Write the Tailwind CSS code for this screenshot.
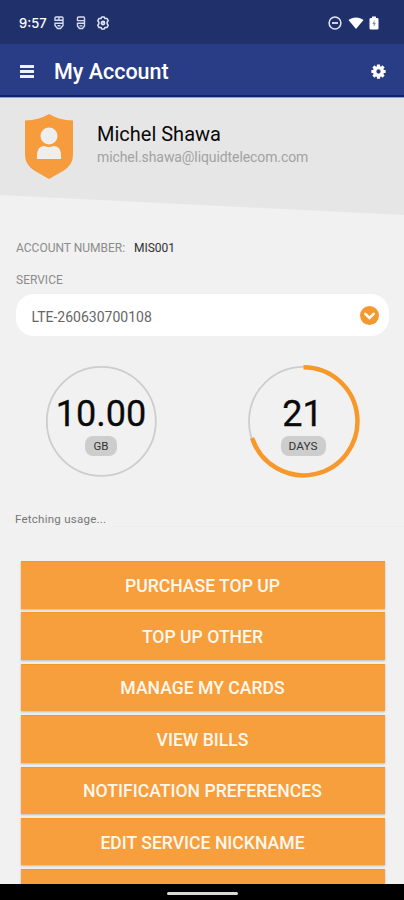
<!DOCTYPE html>
<html lang="en">
<head>
<meta charset="utf-8">
<title>My Account</title>
<script src="https://cdn.jsdelivr.net/npm/@tailwindcss/browser@4"></script>
</head>
<body class="w-[404px] h-[900px] overflow-hidden bg-[#f1f1f1] font-[Roboto,sans-serif] flex flex-col whitespace-nowrap">
  <div class="h-[44px] shrink-0 bg-[#20306a] text-white flex items-center pl-[19px] pr-[25px]">
    <span class="w-[34px] text-[13px] leading-none font-medium font-[Inter,sans-serif] pt-[3px]">9:57</span>
    <svg class="w-[12px] h-[14px] mt-[2px]" viewBox="0 0 12 14" fill="none" stroke="#d5dbf2" stroke-width="1.400"><path d="M3 1h6q1 0 1 1v7.500L7.500 12.500h-3L2 9.500V7.200h8M10 4.300H2V2q0-1 1-1M4.500 9.700h3M6 1v3"/></svg>
    <svg class="w-[12px] h-[14px] mt-[2px] ml-[10px]" viewBox="0 0 12 14" fill="none" stroke="#d5dbf2" stroke-width="1.400"><path d="M2.500 5V2q0-1 1-1h5q1 0 1 1v8L7.500 12.500h-3l-2-2.500V7.300h7M2.500 4.600h7M4.500 9.900h3"/></svg>
    <svg class="w-[14px] h-[14px] mt-[2px] ml-[9px]" viewBox="0 0 14 14" fill="none" stroke="#e1e6f8" stroke-width="1.500" stroke-linejoin="round"><path d="M5.700 1h2.600l.7 1.600 1.900-.2 1.300 2.300L11.100 6.200v1.600l1.100 1.500-1.300 2.300-1.900-.2-.7 1.600H5.700L5 11.400l-1.900.2-1.300-2.300 1.100-1.500V6.200L1.800 4.700l1.300-2.300 1.900.2z"/><circle cx="7" cy="7" r="1.500" stroke-width="1.800"/></svg>
    <svg class="w-[14px] h-[14px] ml-auto mt-[2px]" viewBox="0 0 14 14" fill="none" stroke="#e1e6f8"><circle cx="7" cy="7" r="5.900" stroke-width="1.500"/><path d="M4 7h6" stroke-width="1.800"/></svg>
    <svg class="w-[16px] h-[12px] ml-[6px] mt-[1px]" viewBox="0 0 16 12" fill="#fff"><path d="M.5 3C4.500-.5 11.500-.5 15.500 3L8 12z"/></svg>
    <svg class="w-[10px] h-[14px] ml-[5px] mt-[2px]" viewBox="0 0 10 14"><path d="M3 .5h4V2h1.200q1.300 0 1.300 1.300v8.900q0 1.300-1.300 1.300H1.800Q.5 13.500.5 12.200V3.300Q.5 2 1.800 2H3z" fill="#fff"/><path d="M5.500 4L3.500 8h1.300v3l2-4H5.500z" fill="#808ba9"/></svg>
  </div>
  <div class="h-[53px] shrink-0 bg-[#283d86] border-b-2 border-[#11236f] text-white flex items-center pl-[20px] pr-[18px] pt-[3px]">
    <svg class="w-[14px] h-[13px]" viewBox="0 0 14 13" fill="#eef0fa"><path d="M0 0h14v3H0zM0 5h14v3H0zM0 10h14v3H0z"/></svg>
    <h1 class="ml-[20px] text-[21.500px] leading-none font-medium pt-[2px]">My Account</h1>
    <svg class="ml-auto w-[15px] h-[15px]" viewBox="0 0 16 16" fill="none" stroke="#fff"><circle cx="8" cy="8" r="4.100" stroke-width="3.600"/><path d="M8 .4v2.800M8 12.800v2.800M.4 8h2.800M12.800 8h2.800M2.630 2.630l2 2M11.370 11.370l2 2M2.630 13.370l2-2M11.370 4.630l2-2" stroke-width="3.400"/></svg>
  </div>
  <div class="h-[118px] shrink-0 bg-[#e6e6e6] flex pl-[25px] [clip-path:polygon(0_0,100%_0,100%_100%,0_98px)] border-t border-[#8f9bc8]">
    <svg class="w-[48px] h-[65px] mt-[16px]" viewBox="0 0 48 65"><path d="M24 0Q34 6 48 6.500V41Q48 51 38 57L24 65 10 57Q0 51 0 41V6.500Q14 6 24 0z" fill="#f79c3c"/><circle cx="24" cy="22" r="8.500" fill="#eee"/><path d="M12 45v-3Q12 32 19 32q5 2 10 0 7 0 7 10v3z" fill="#eee"/></svg>
    <div class="ml-[24px] pt-[24px]">
      <div class="text-[20px] leading-[24px] text-[#080808]">Michel Shawa</div>
      <div class="text-[14px] leading-[20px] text-[#a2a2a2] tracking-[-0.090px] pt-px">michel.shawa@liquidtelecom.com</div>
    </div>
  </div>
  <div class="pl-[16px] pr-[15px] pt-[24px] flex flex-col">
    <div class="text-[12px] leading-[16px] text-[#8c8c8c] flex pt-px"><span class="w-[118px]">ACCOUNT NUMBER:</span><span class="text-[#303030]">MIS001</span></div>
    <div class="mt-[16px] text-[12px] leading-[16px] text-[#8c8c8c]">SERVICE</div>
    <div class="mt-[6px] h-[42px] rounded-[18px] bg-white flex items-center pl-[15.500px] pr-[10px] text-[14px] text-[#666]">
      <span class="pt-[4px]">LTE-260630700108</span>
      <svg class="ml-auto w-[19px] h-[19px]" viewBox="0 0 19 19"><circle cx="9.500" cy="9.500" r="9.500" fill="#f5992e"/><path d="M5.300 7.800l4.200 4.200 4.200-4.200" fill="none" stroke="#fff" stroke-width="2.600" stroke-linecap="round"/></svg>
    </div>
  </div>
  <div class="mt-[28px] h-[114px] shrink-0 pl-[44px] pr-[44px] flex justify-between">
    <div class="w-[114px] h-[114px] grid *:[grid-area:1/1]">
      <svg viewBox="0 0 114 114" fill="none"><circle cx="57.300" cy="57.300" r="54.500" stroke="#cdcdcd" stroke-width="1.800"/></svg>
      <div class="flex flex-col items-center pt-[32px]">
        <div class="text-[36px] leading-[36px] text-[#0a0a0a] [-webkit-text-stroke:0.300px_#0a0a0a]">10.00</div>
        <div class="mt-[4px] w-[32px] h-[20px] rounded-[8px] bg-[#cdcdcd] text-[11.500px] leading-[21px] text-center text-[#333]">GB</div>
      </div>
    </div>
    <div class="w-[114px] h-[114px] grid *:[grid-area:1/1]">
      <svg viewBox="0 0 114 114" fill="none"><circle cx="57.500" cy="57.300" r="54.500" stroke="#cdcdcd" stroke-width="1.800"/><path d="M57.500 3.300A54 54 0 1 1 6.100 74" stroke="#f7982a" stroke-width="4.500"/></svg>
      <div class="flex flex-col items-center pt-[32px]">
        <div class="text-[36px] leading-[36px] text-[#0a0a0a] -ml-[1px] [-webkit-text-stroke:0.300px_#0a0a0a]">21</div>
        <div class="mt-[4px] w-[45px] h-[20px] rounded-[8px] bg-[#cdcdcd] text-[11.800px] leading-[21px] text-center text-[#333]">DAYS</div>
      </div>
    </div>
  </div>
  <div class="mt-[33px] pl-[15px] flex items-center text-[11.500px] leading-[16px] text-[#777]"><span class="w-[98px] tracking-[0.250px]">Fetching usage...</span><span class="flex-1 h-px bg-[#ededed] mt-[14px]"></span></div>
  <div class="mt-[34px] h-[323px] overflow-hidden pl-[20.500px] pr-[19.500px] flex flex-col gap-[3.900px] text-[#fff8ed] font-medium text-[17.600px] *:h-[47.500px] *:shrink-0 *:bg-[#f79e3d] *:flex *:items-center *:justify-center *:pt-[1px] *:border-t *:border-[#f29b22] *:shadow-[0_1px_2px_#bfb6c0]">
    <div>PURCHASE TOP UP</div>
    <div>TOP UP OTHER</div>
    <div>MANAGE MY CARDS</div>
    <div>VIEW BILLS</div>
    <div>NOTIFICATION PREFERENCES</div>
    <div>EDIT SERVICE NICKNAME</div>
    <div></div>
  </div>
  <div class="h-[16px] shrink-0 mt-auto bg-black flex justify-center pt-[8px]"><div class="w-[71px] h-[3px] rounded-sm bg-[#d8d8d8]"></div></div>
</body>
</html>
